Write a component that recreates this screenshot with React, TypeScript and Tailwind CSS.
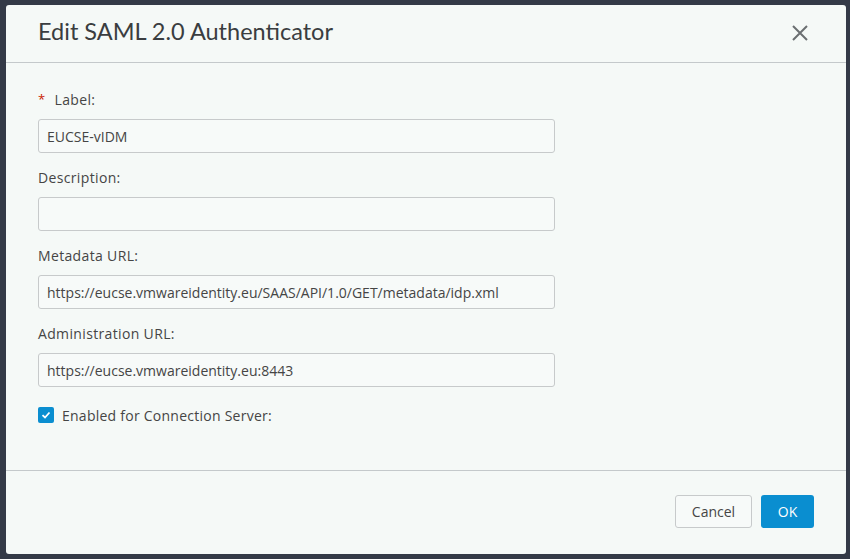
import React from "react";

const Field = ({ label, value, required }: { label: string; value: string; required?: boolean }) => (
  <div className="flex flex-col">
    <div className="flex items-center h-[20px] text-[14px] tracking-[0.35px] text-[#454545]">
      {required && <span className="text-[#c92100] text-[13px] mr-[9px] mt-[2px]">*</span>}
      <span>{label}</span>
    </div>
    <div className="mt-[10px] w-[517px] h-[34px] border border-[#c7cacb] rounded-[3px] bg-[#f7faf9] flex items-center px-[8px] text-[14px] text-[#454545]">
      {value}
    </div>
  </div>
);

export default function App() {
  return (
    <div className="w-[850px] h-[559px] bg-[#343a47] pt-[5px] pl-[6px]" style={{ fontFamily: '"Open Sans", "Noto Sans", sans-serif' }}>
      <div className="w-[840px] h-[549px] bg-[#f5f9f7] rounded-[3px] flex flex-col">
        <div className="h-[58px] border-b border-[#c4c9cb] flex items-center justify-between pl-[32px] pr-[36px] shrink-0">
          <div className="text-[23.5px] text-[#3a3d40] mb-[3px]" style={{ fontFamily: 'Lato, "Open Sans", sans-serif' }}>
            Edit SAML 2.0 Authenticator
          </div>
          <svg width="18" height="18" viewBox="0 0 18 18" className="mb-[1px] mr-[1px]">
            <path d="M2 2 L16 16 M16 2 L2 16" stroke="#6b6f72" strokeWidth="2" />
          </svg>
        </div>
        <div className="flex-1 pl-[32px] pt-[26px] flex flex-col gap-[14px]">
          <Field label="Label:" value="EUCSE-vIDM" required />
          <Field label="Description:" value="" />
          <Field label="Metadata URL:" value="https://eucse.vmwareidentity.eu/SAAS/API/1.0/GET/metadata/idp.xml" />
          <Field label="Administration URL:" value="https://eucse.vmwareidentity.eu:8443" />
          <div className="flex items-center mt-[4px] h-[20px]">
            <div className="w-[16px] h-[16px] rounded-[2px] bg-[#0a8ed0] flex items-center justify-center">
              <svg width="10" height="8" viewBox="0 0 10 8">
                <path d="M1.5 4.2 L4 6.5 L8.5 1.5" stroke="#fff" strokeWidth="1.8" fill="none" />
              </svg>
            </div>
            <span className="ml-[8px] text-[14px] tracking-[0.25px] text-[#454545] font-medium">Enabled for Connection Server:</span>
          </div>
        </div>
        <div className="h-[84px] border-t border-[#c4c9cb] flex items-start justify-end pt-[24px] pr-[32px] gap-[9px] shrink-0">
          <button className="w-[77px] h-[33px] border border-[#c7cacb] rounded-[3px] bg-[#f7faf9] text-[14px] text-[#454545]">Cancel</button>
          <button className="w-[53px] h-[33px] rounded-[3px] bg-[#0a8ed0] text-[14px] text-white">OK</button>
        </div>
      </div>
    </div>
  );
}
